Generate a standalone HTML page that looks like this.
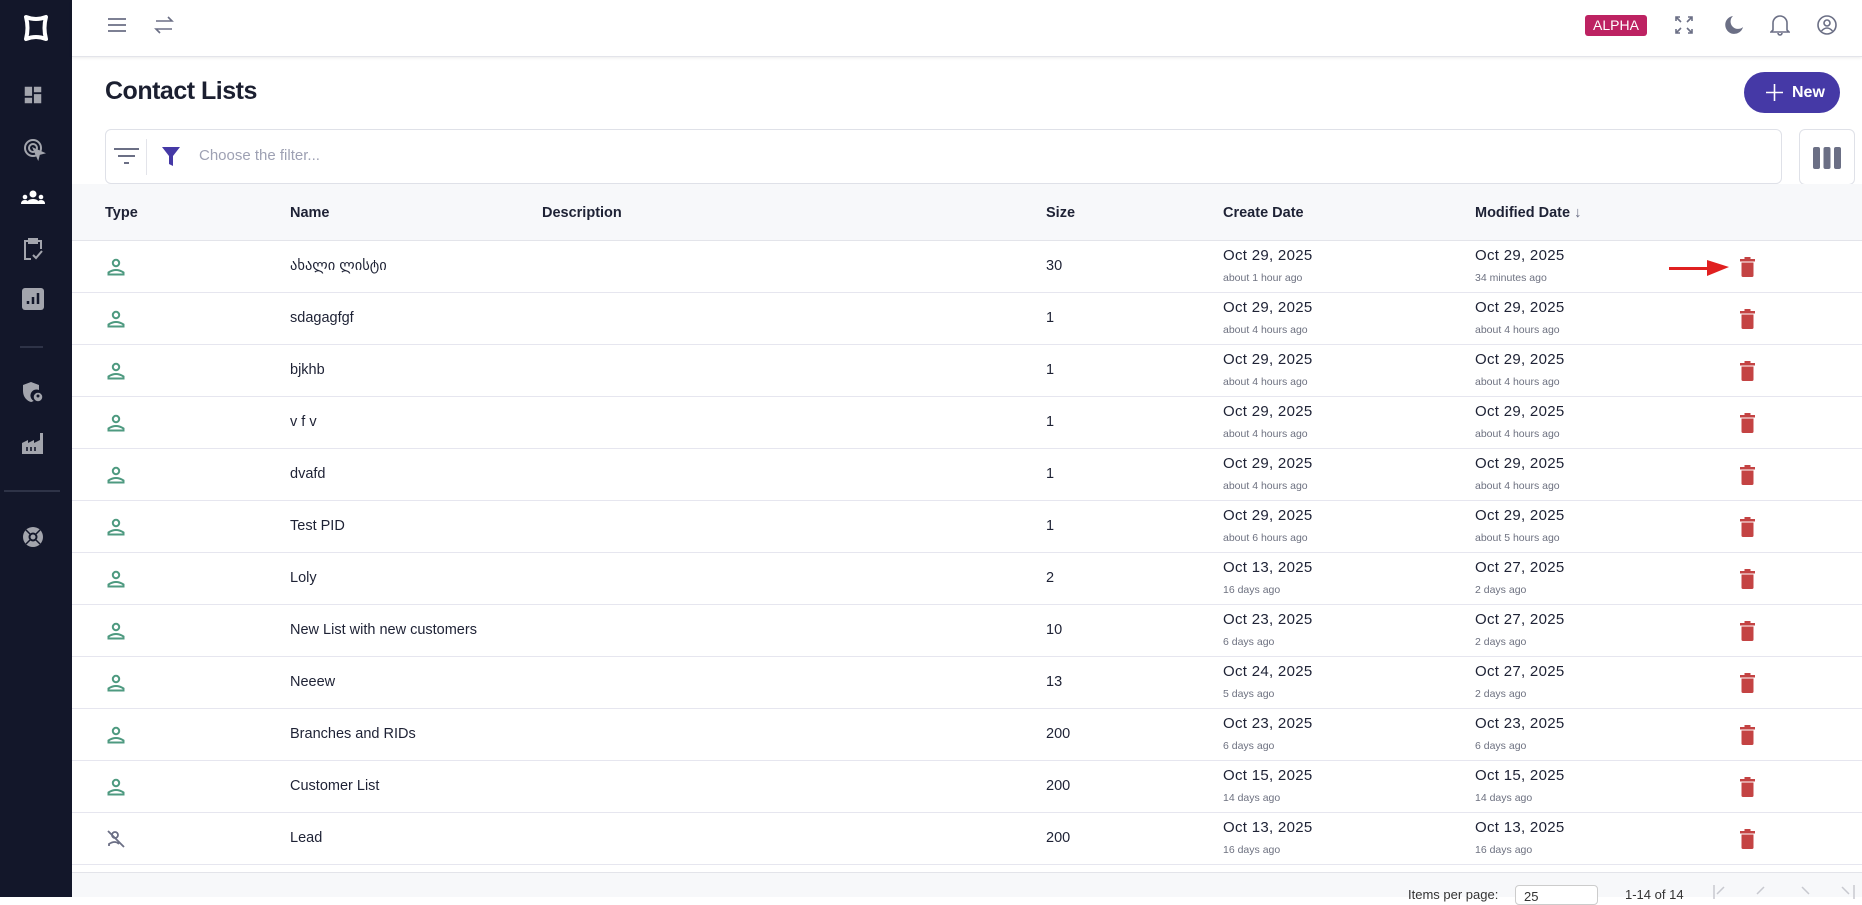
<!DOCTYPE html>
<html><head><meta charset="utf-8"><style>
*{box-sizing:border-box;margin:0;padding:0}
body{width:1862px;height:897px;overflow:hidden;background:#fff;font-family:"Liberation Sans","DejaVu Sans",sans-serif;color:#1e2235;position:relative}
.sb{position:absolute;left:0;top:0;width:72px;height:897px;background:#13172a}
.sb svg{position:absolute;left:22px}
.div{position:absolute;height:2px;background:#2e3347}
.top{position:absolute;left:72px;top:0;right:0;height:57px;border-bottom:1px solid #e3e4ea;box-shadow:0 1px 3px rgba(0,0,0,.08)}
.ic{position:absolute}
h1{position:absolute;left:105px;top:77px;font-size:25px;font-weight:700;letter-spacing:-0.5px;color:#1b1f30}
.new{position:absolute;left:1744px;top:72px;width:96px;height:41px;border-radius:21px;background:#4539a6;color:#fff;font-weight:700;font-size:16px;line-height:41px;padding-left:48px}
.filter{position:absolute;left:105px;top:129px;width:1677px;height:55px;border:1px solid #dfe1e8;border-radius:6px}
.colbtn{position:absolute;left:1799px;top:129px;width:56px;height:56px;border:1px solid #dfe1e8;border-radius:6px}
.hdr{position:absolute;left:72px;top:184px;right:0;height:57px;background:#f7f8fa;border-bottom:1px solid #e3e4ea}
.hdr span{position:absolute;top:21px;font-size:14.5px;font-weight:700;color:#1e2235}
.row{position:absolute;left:72px;right:0;height:52px;border-bottom:1.5px solid #e6e6ef}
.row .n{position:absolute;left:218px;top:17px;font-size:14.5px}
.row .s{position:absolute;left:974px;top:17px;font-size:14.5px}
.row .d{position:absolute;top:6px;font-size:15px;letter-spacing:.3px}
.row .a{position:absolute;top:31px;font-size:10.5px;color:#6d7180}
.row .u{position:absolute;left:35px;top:17px}
.row .t{position:absolute;left:1668px;top:16px}
.foot{position:absolute;left:72px;right:0;top:872px;height:25px;background:#f7f8fa;border-top:1px solid #e3e4ea;font-size:13px;color:#333}
</style></head><body>
<div class="sb">
<svg style="top:13px;left:14px" width="44" height="30" viewBox="0 0 30 30"><path d="M5 4 Q15 8 25 4 Q22 15 25 26 Q15 22 5 26 Q8 15 5 4Z" fill="none" stroke="#fff" stroke-width="4" stroke-linejoin="round"/></svg>
<svg style="top:84px" width="22" height="22" viewBox="0 0 24 24" fill="#a3a5ad"><path d="M3 13h8V3H3zm0 8h8v-6H3zm10 0h8V11h-8zm0-18v6h8V3z"/></svg>
<svg style="top:137px" width="24" height="24" viewBox="0 0 24 24" fill="none" stroke="#a3a5ad" stroke-width="2"><circle cx="11" cy="11" r="8"/><circle cx="11" cy="11" r="4"/><path d="M12 12l9 4-4 1-1 4z" fill="#a3a5ad"/></svg>
<svg style="top:188px;left:20px" width="26" height="20" viewBox="0 0 26 20" fill="#fff"><circle cx="13" cy="6" r="3.5"/><path d="M7 16q0-5 6-5t6 5z"/><circle cx="5" cy="9" r="2.3"/><path d="M1 16q0-4 4-4t3 4z"/><circle cx="21" cy="9" r="2.3"/><path d="M25 16q0-4-4-4t-3 4z"/></svg>
<svg style="top:237px" width="22" height="24" viewBox="0 0 22 24" fill="none" stroke="#a3a5ad" stroke-width="2"><path d="M7 4H3v18h6M15 4h4v8"/><rect x="7" y="2" width="8" height="4" fill="#a3a5ad"/><path d="M11 18l3 3 6-7"/></svg>
<svg style="top:288px" width="22" height="22" viewBox="0 0 22 22"><rect width="22" height="22" rx="3" fill="#a3a5ad"/><path d="M6 16v-3M11 16V9M16 16V5" stroke="#13172a" stroke-width="2.5"/></svg>
<div class="div" style="left:20px;width:23px;top:346px"></div>
<svg style="top:381px" width="22" height="22" viewBox="0 0 22 22" fill="#a3a5ad"><path d="M9 1L1 4v6c0 6 4 10 8 11 1-0 2-1 3-1a6 6 0 0 1 5-11V4z"/><circle cx="16" cy="16" r="5" fill="#a3a5ad" stroke="#13172a" stroke-width="1.5"/><circle cx="16" cy="15" r="1.5" fill="#13172a"/></svg>
<svg style="top:432px" width="22" height="22" viewBox="0 0 22 22" fill="#a3a5ad"><path d="M0 22V11l6-3v3l6-3v3l6-3V1h3v21z"/><path d="M5 15v4M9 15v4M13 15v4" stroke="#13172a" stroke-width="1.6"/></svg>
<div class="div" style="left:4px;width:56px;top:490px"></div>
<svg style="top:526px" width="22" height="22" viewBox="0 0 22 22"><circle cx="11" cy="11" r="10" fill="#a3a5ad"/><circle cx="11" cy="11" r="4.5" fill="#13172a"/><circle cx="11" cy="11" r="2.5" fill="#a3a5ad"/><path d="M4 4l4 4M18 4l-4 4M4 18l4-4M18 18l-4-4" stroke="#13172a" stroke-width="1.5"/></svg>
</div>
<div class="top">
<svg class="ic" style="left:35px;top:17px" width="20" height="16" viewBox="0 0 20 16" stroke="#6b6f85" stroke-width="1.8"><path d="M1 2h18M1 8h18M1 14h18"/></svg>
<svg class="ic" style="left:82px;top:14px" width="20" height="22" viewBox="0 0 20 22" fill="none" stroke="#6b6f85" stroke-width="1.6"><path d="M2 7h16l-4-4M18 15H2l4 4"/></svg>
<div style="position:absolute;left:1513px;top:15px;width:62px;height:21px;background:#bd2262;color:#fff;border-radius:3px;font-size:14px;text-align:center;line-height:21px">ALPHA</div>
<svg class="ic" style="left:1603px;top:16px" width="18" height="18" viewBox="0 0 18 18" fill="none" stroke="#6b6f85" stroke-width="1.6"><path d="M1 5V1h4M1 1l5 5M13 1h4v4M17 1l-5 5M1 13v4h4M1 17l5-5M17 13v4h-4M17 17l-5-5"/></svg>
<svg class="ic" style="left:1652px;top:15px" width="20" height="20" viewBox="0 0 20 20"><path d="M9 1a9 9 0 1 0 10 11A7 7 0 0 1 9 1z" fill="#6b6f85"/></svg>
<svg class="ic" style="left:1698px;top:14px" width="20" height="22" viewBox="0 0 20 22" fill="none" stroke="#6b6f85" stroke-width="1.6"><path d="M3 16V9a7 7 0 0 1 14 0v7l2 2H1z M8 19a2 2 0 0 0 4 0"/></svg>
<svg class="ic" style="left:1745px;top:15px" width="20" height="20" viewBox="0 0 20 20" fill="none" stroke="#6b6f85" stroke-width="1.6"><circle cx="10" cy="10" r="9"/><circle cx="10" cy="8" r="3"/><path d="M4.5 16q5.5-6 11 0"/></svg>
</div>
<h1>Contact Lists</h1>
<div class="new"><svg style="position:absolute;left:22px;top:12px" width="17" height="17" viewBox="0 0 17 17" stroke="#fff" stroke-width="1.6"><path d="M8.5 0v17M0 8.5h17"/></svg>New</div>
<div class="filter">
<svg style="position:absolute;left:8px;top:17px" width="25" height="20" viewBox="0 0 25 20" stroke="#6b6f85" stroke-width="2"><path d="M0 2h25M4 9h17M10 16h5"/></svg>
<div style="position:absolute;left:40px;top:9px;width:1px;height:36px;background:#e3e4ea"></div>
<svg style="position:absolute;left:56px;top:17px" width="18" height="20" viewBox="0 0 18 20" fill="#4539a6"><path d="M0 0h18l-7 9v10l-4-2V9z"/></svg>
<span style="position:absolute;left:93px;top:17px;font-size:15px;color:#9ea1b3">Choose the filter...</span>
</div>
<div class="colbtn"><svg style="position:absolute;left:13px;top:17px" width="28" height="22" viewBox="0 0 28 22" fill="#6b6f85"><rect width="7" height="22" rx="2"/><rect x="10.5" width="7" height="22" rx="2"/><rect x="21" width="7" height="22" rx="2"/></svg></div>
<div class="hdr"><span style="left:33px">Type</span><span style="left:218px">Name</span><span style="left:470px">Description</span><span style="left:974px">Size</span><span style="left:1151px">Create Date</span><span style="left:1403px">Modified Date <b style="color:#6b6f85">↓</b></span></div>
<div id="rows"></div>
<svg style="position:absolute;left:1669px;top:259px" width="60" height="18" viewBox="0 0 60 18"><path d="M0 9.5h42" stroke="#e02020" stroke-width="3"/><path d="M38 1l22 7-22 9z" fill="#e02020"/></svg>
<div class="foot"><span style="position:absolute;left:1336px;top:14px">Items per page:</span><div style="position:absolute;left:1443px;top:12px;width:83px;height:20px;border:1px solid #ccc;border-radius:4px;background:#fff;font-size:13px;padding:3px 8px">25</div><span style="position:absolute;left:1553px;top:14px">1-14 of 14</span>
<svg style="position:absolute;left:1640px;top:12px" width="200" height="14" viewBox="0 0 200 14" fill="none" stroke="#c8c9d0" stroke-width="1.5"><path d="M2 0v14M12 2l-7 7M52 2l-7 7M90 2l7 7M130 2l7 7M142 0v14"/></svg></div>
<script>
var d=[["ახალი ლისტი","30","Oct 29, 2025","about 1 hour ago","Oct 29, 2025","34 minutes ago"],
["sdagagfgf","1","Oct 29, 2025","about 4 hours ago","Oct 29, 2025","about 4 hours ago"],
["bjkhb","1","Oct 29, 2025","about 4 hours ago","Oct 29, 2025","about 4 hours ago"],
["v f v","1","Oct 29, 2025","about 4 hours ago","Oct 29, 2025","about 4 hours ago"],
["dvafd","1","Oct 29, 2025","about 4 hours ago","Oct 29, 2025","about 4 hours ago"],
["Test PID","1","Oct 29, 2025","about 6 hours ago","Oct 29, 2025","about 5 hours ago"],
["Loly","2","Oct 13, 2025","16 days ago","Oct 27, 2025","2 days ago"],
["New List with new customers","10","Oct 23, 2025","6 days ago","Oct 27, 2025","2 days ago"],
["Neeew","13","Oct 24, 2025","5 days ago","Oct 27, 2025","2 days ago"],
["Branches and RIDs","200","Oct 23, 2025","6 days ago","Oct 23, 2025","6 days ago"],
["Customer List","200","Oct 15, 2025","14 days ago","Oct 15, 2025","14 days ago"],
["Lead","200","Oct 13, 2025","16 days ago","Oct 13, 2025","16 days ago"]];
var h="";
d.forEach(function(r,i){
var ic=i==11?'<svg width="18" height="18" viewBox="0 0 18 18" fill="none" stroke="#6b6f85" stroke-width="1.8"><circle cx="8" cy="5" r="3"/><path d="M2 16v-2q6-4 10 0M1 1l16 16"/></svg>':'<svg width="18" height="18" viewBox="0 0 18 18" fill="none" stroke="#4e9a80" stroke-width="2"><circle cx="9" cy="5" r="3.2"/><path d="M1.5 16.5v-2q7.5-5 15 0v2z"/></svg>';
h+='<div class="row" style="top:'+(241+i*52)+'px"><span class="u">'+ic+'</span><span class="n">'+r[0]+'</span><span class="s">'+r[1]+'</span><span class="d" style="left:1151px">'+r[2]+'</span><span class="a" style="left:1151px">'+r[3]+'</span><span class="d" style="left:1403px">'+r[4]+'</span><span class="a" style="left:1403px">'+r[5]+'</span><span class="t"><svg width="15" height="20" viewBox="0 0 15 20" fill="#c44343"><rect x="4.5" y="0" width="6" height="2"/><rect x="0" y="2" width="15" height="2.5"/><path d="M1.5 5.5h12v13a1.5 1.5 0 0 1-1.5 1.5H3a1.5 1.5 0 0 1-1.5-1.5z"/></svg></span></div>';});
document.getElementById("rows").innerHTML=h;
</script>
</body></html>
